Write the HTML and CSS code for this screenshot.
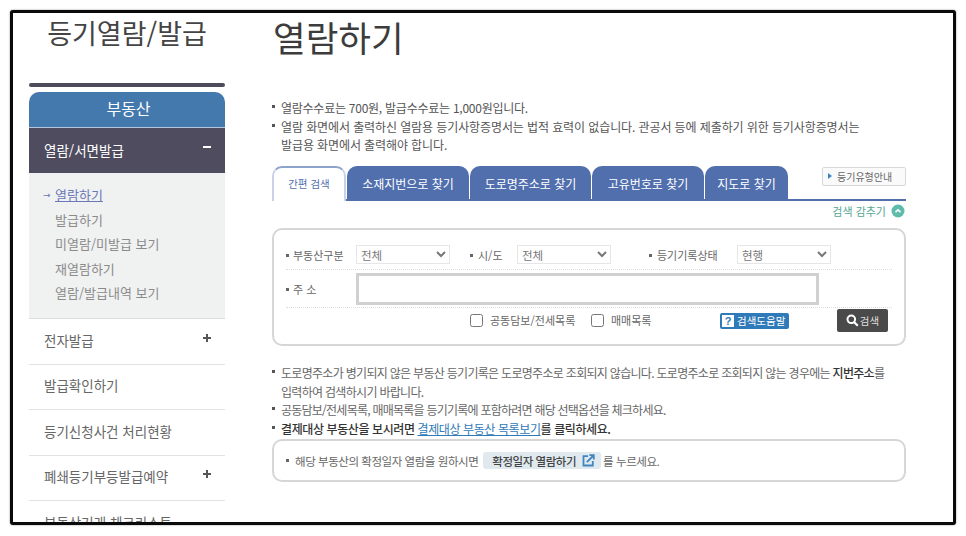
FILE: index.html
```html
<!DOCTYPE html>
<html lang="ko">
<head>
<meta charset="utf-8">
<title>열람하기</title>
<link rel="stylesheet" href="styles.css">
</head>
<body>
<div class="frame">
  <aside class="side">
    <h2 class="side-title">등기열람/발급</h2>
    <div class="side-bar"></div>
    <div class="side-head">부동산</div>
    <div class="menu-open"><span>열람/서면발급</span><span class="sign minus"></span></div>
    <ul class="sub">
      <li class="on"><a>열람하기</a></li>
      <li>발급하기</li>
      <li>미열람/미발급 보기</li>
      <li>재열람하기</li>
      <li>열람/발급내역 보기</li>
    </ul>
    <div class="menu-item"><span>전자발급</span><span class="sign plus"></span></div>
    <div class="menu-item"><span>발급확인하기</span></div>
    <div class="menu-item"><span>등기신청사건 처리현황</span></div>
    <div class="menu-item"><span>폐쇄등기부등발급예약</span><span class="sign plus"></span></div>
    <div class="menu-item"><span>부동산거래 체크리스트</span></div>
  </aside>
  <main class="main">
    <h1 class="title">열람하기</h1>
    <ul class="notes top">
      <li class="first">열람수수료는 700원, 발급수수료는 1,000원입니다.</li>
      <li>열람 화면에서 출력하신 열람용 등기사항증명서는 법적 효력이 없습니다. 관공서 등에 제출하기 위한 등기사항증명서는<br>발급용 화면에서 출력해야 합니다.</li>
    </ul>
    <div class="tabs">
      <div class="tab active t1">간편 검색</div>
      <div class="tab t2">소재지번으로 찾기</div>
      <div class="tab t3">도로명주소로 찾기</div>
      <div class="tab t4">고유번호로 찾기</div>
      <div class="tab t5">지도로 찾기</div>
      <div class="guide"><i></i>등기유형안내</div>
    </div>
    <div class="hide-row">검색 감추기
      <svg class="hide-ic" width="14" height="14" viewBox="0 0 14 14"><circle cx="7" cy="7" r="6.5" fill="#5dbcaa"/><path d="M4.5 8.2 7 5.8l2.5 2.4" fill="none" stroke="#fff" stroke-width="1.6"/></svg>
    </div>
    <section class="search">
      <div class="row r1">
        <span class="lb l1">부동산구분</span>
        <select class="sel s1"><option>전체</option></select>
        <span class="lb l2">시/도</span>
        <select class="sel s2"><option>전체</option></select>
        <span class="lb l3">등기기록상태</span>
        <select class="sel s3"><option>현행</option></select>
      </div>
      <div class="row r2">
        <span class="lb l1">주 소</span>
        <input class="addr" type="text">
      </div>
      <div class="row r3">
        <label class="chk c1"><input type="checkbox">공동담보/전세목록</label>
        <label class="chk c2"><input type="checkbox">매매목록</label>
        <span class="help"><b>?</b>검색도움말</span>
        <button class="go" type="button">
          <svg width="13" height="13" viewBox="0 0 13 13"><circle cx="5.3" cy="5.3" r="3.8" fill="none" stroke="#fff" stroke-width="2"/><path d="M8.2 8.2l3.6 3.6" stroke="#fff" stroke-width="2.2"/></svg>검색
        </button>
      </div>
    </section>
    <ul class="notes bottom">
      <li>도로명주소가 병기되지 않은 부동산 등기기록은 도로명주소로 조회되지 않습니다. 도로명주소로 조회되지 않는 경우에는 <b>지번주소</b>를<br>입력하여 검색하시기 바랍니다.</li>
      <li class="tight">공동담보/전세목록, 매매목록을 등기기록에 포함하려면 해당 선택옵션을 체크하세요.</li>
      <li class="strong">결제대상 부동산을 보시려면 <a>결제대상 부동산 목록보기</a>를 클릭하세요.</li>
    </ul>
    <div class="confirm">
      <span class="dot"></span>
      <span>해당 부동산의 확정일자 열람을 원하시면</span>
      <span class="pill"><span>확정일자 열람하기</span>
        <svg width="13" height="13" viewBox="0 0 13 13"><path d="M6 2.2H1.5v9.3h9.3V7" fill="none" stroke="#3f86c0" stroke-width="1.8"/><path d="M4.8 8.2 11 2M7.4 1.2h4.4v4.4" fill="none" stroke="#3f86c0" stroke-width="1.8"/></svg>
      </span>
      <span>를 누르세요.</span>
    </div>
  </main>
</div>
</body>
</html>
```
FILE: styles.css
```css
* { box-sizing: border-box; }
html, body { margin: 0; padding: 0; background: #fff; }
body {
  width: 966px;
  height: 536px;
  overflow: hidden;
  padding: 10px 10px 11px 10px;
  font-family: "Noto Sans CJK KR", "Noto Sans", sans-serif;
  color: #555;
}
ul { list-style: none; margin: 0; padding: 0; }
h1, h2 { margin: 0; font-weight: 400; }

.frame {
  width: 946px;
  height: 515px;
  border: 3px solid #0a0a0a;
  border-radius: 3px;
  box-shadow: 0 0 2px #888;
  padding-left: 16px;
  display: flex;
  gap: 47px;
  overflow: hidden;
  background: #fff;
}

/* sidebar */
.side { width: 196px; flex: none; }
.side-title {
  font-size: 27px;
  line-height: 40px;
  height: 70px;
  text-align: center;
  color: #444;
}
.side-bar { height: 4px; background: #4e4c5c; border-radius: 2px; }
.side-head {
  margin-top: 5px;
  height: 36px;
  line-height: 33px;
  padding-left: 3px;
  text-align: center;
  color: #fff;
  font-size: 16px;
  background: #4379ad;
  border-radius: 10px 10px 0 0;
  border-bottom: 1px solid #b5c7da;
}
.menu-open, .menu-item {
  display: flex;
  justify-content: space-between;
  align-items: center;
  padding: 0 14px 2px 15px;
  font-size: 13.5px;
}
.menu-open { height: 45px; background: #4e4c5e; color: #fff; }
.menu-item { height: 45.5px; padding-bottom: 3px; color: #666; border-bottom: 1px solid #e2e2e2; white-space: nowrap; }
.sub {
  height: 146px;
  background: #f0f1f1;
  border-bottom: 1px solid #dcdcdc;
  padding: 10px 0 0 26px;
  font-size: 13px;
  line-height: 24.5px;
  color: #8b8b8b;
}
.sub .on { position: relative; color: #6a77b8; }
.sub .on a { text-decoration: underline; }
.sub .on::before {
  content: "→";
  position: absolute;
  left: -12px;
  font: 9px/24px "DejaVu Sans", sans-serif;
}
.sign { position: relative; width: 8px; height: 8px; top: -2px; }
.minus { top: -3px; }
.sign::before { content: ""; position: absolute; left: 0; top: 3px; width: 8px; height: 2px; background: #555; }
.minus::before { background: #fff; }
.plus::after { content: ""; position: absolute; left: 3px; top: 0; width: 2px; height: 8px; background: #555; }

/* main */
.main { width: 634px; flex: none; }
.title {
  font-size: 35.5px;
  line-height: 48px;
  height: 85px;
  padding-left: 1px;
  color: #3c3c3c;
}
.notes { font-size: 12px; color: #555; letter-spacing: -0.1px; }
.notes li { position: relative; padding-left: 9px; line-height: 18.5px; }
.notes li::before {
  content: "";
  position: absolute;
  left: 0;
  top: 6px;
  width: 3px;
  height: 3px;
  background: #555;
}
.top { height: 57px; padding-top: 1px; }
.top li { white-space: nowrap; }
.top .first { letter-spacing: -0.25px; }

.tabs {
  position: relative;
  margin-top: 10px;
  height: 36px;
  display: flex;
  align-items: flex-end;
  gap: 1px;
  border-bottom: 2px solid #516fad;
}
.tab {
  height: 35px;
  margin-bottom: -2px;
  border-radius: 10px 10px 0 0;
  background: #516fad;
  color: #fff;
  font-size: 12px;
  text-align: center;
  line-height: 35px;
  flex: none;
  white-space: nowrap;
}
.tab.active {
  background: #fff;
  color: #516fad;
  border: 2px solid #c9d3e8;
  border-bottom: 0;
  border-top-color: #8ea3cc;
  font-size: 10.5px;
  line-height: 32px;
}
.t1 { width: 74px; }
.t2 { width: 122px; }
.t3 { width: 121px; }
.t4 { width: 112px; }
.t5 { width: 83px; }
.guide {
  position: absolute;
  right: 0;
  top: 2px;
  width: 84px;
  height: 19px;
  background: #fafafa;
  border: 1px solid #d8d8d8;
  border-radius: 2px;
  font-size: 10px;
  line-height: 17px;
  color: #666;
  padding-left: 14px;
}
.guide i {
  position: absolute;
  left: 5px;
  top: 5px;
  border-left: 4px solid #3f86c0;
  border-top: 3px solid transparent;
  border-bottom: 3px solid transparent;
}
.hide-row {
  height: 20px;
  display: flex;
  justify-content: flex-end;
  align-items: center;
  gap: 5px;
  padding-right: 1px;
  font-size: 11px;
  color: #54a894;
}
.hide-ic { flex: none; }

.search {
  margin-top: 7px;
  height: 118px;
  border: 2px solid #d6d6d6;
  border-radius: 10px;
  padding: 14px 12px 0 12px;
}
.row { position: relative; display: flex; align-items: center; font-size: 11px; color: #666; }
.r1, .r2 { border-bottom: 1px dotted #ddd; }
.r1 { height: 26px; padding-bottom: 4px; }
.r2 { height: 38px; }
.r3 { height: 30px; }
.lb { position: relative; padding-left: 7px; flex: none; white-space: nowrap; }
.lb::before {
  content: "";
  position: absolute;
  left: 0;
  top: 7px;
  width: 3px;
  height: 3px;
  background: #666;
}
.l1 { width: 70px; }
.l2 { width: 47px; margin-left: 20px; padding-left: 8px; }
.l3 { width: 88px; margin-left: 38px; padding-left: 8px; }
.sel {
  width: 94px;
  height: 19px;
  border: 1px solid #e6e6e6;
  background: #fff;
  color: #777;
  font: 11.5px "Noto Sans CJK KR", sans-serif;
  flex: none;
  padding: 0;
}
.addr {
  width: 463px;
  height: 32px;
  border: 3px solid #d0d0d0;
  background: #fff;
  flex: none;
}
.chk { position: absolute; top: 5px; display: flex; align-items: center; gap: 7px; white-space: nowrap; line-height: 14px; }
.chk input { margin: 0; width: 13px; height: 13px; }
.c1 { left: 184px; }
.c2 { left: 305px; }
.help {
  position: absolute;
  left: 434px;
  top: 5px;
  width: 69px;
  height: 16px;
  background: #2f7ab8;
  border-radius: 2px;
  color: #fff;
  font-size: 10.5px;
  line-height: 15px;
  padding-left: 17px;
  white-space: nowrap;
}
.help b {
  position: absolute;
  left: 2px;
  top: 2px;
  width: 12px;
  height: 12px;
  background: #fff;
  color: #2f7ab8;
  font: 700 11px/12px "Liberation Sans", sans-serif;
  text-align: center;
}
.go {
  position: absolute;
  left: 551px;
  top: 1px;
  width: 51px;
  height: 23px;
  border: 0;
  border-radius: 2px;
  background: #4a4a4a;
  color: #ddd;
  font: 10.5px "Noto Sans CJK KR", sans-serif;
  display: flex;
  align-items: center;
  justify-content: center;
  gap: 1px;
  padding: 0;
}

.bottom { margin-top: 18px; letter-spacing: -0.7px; color: #666; }
.bottom li { line-height: 18.5px; white-space: nowrap; }
.bottom .tight { letter-spacing: -0.76px; }
.bottom b { color: #333; font-weight: 500; }
.bottom .strong { color: #333; font-weight: 500; letter-spacing: -0.4px; }
.strong a { color: #2f7ab8; text-decoration: underline; font-weight: 400; }

.confirm {
  margin-top: 1px;
  width: 634px;
  height: 43px;
  border: 2px solid #d6d6d6;
  border-radius: 10px;
  display: flex;
  align-items: center;
  padding-left: 12px;
  font-size: 11.5px;
  letter-spacing: -0.45px;
  color: #666;
  white-space: nowrap;
}
.dot { width: 3px; height: 3px; background: #666; margin-right: 6px; flex: none; }
.pill {
  display: inline-flex;
  align-items: center;
  gap: 6px;
  height: 17px;
  margin: 0 2px 0 5px;
  padding: 0 6px 0 9px;
  background: #dfe9ee;
  border-radius: 3px;
  color: #444;
  font-weight: 500;
}
```
